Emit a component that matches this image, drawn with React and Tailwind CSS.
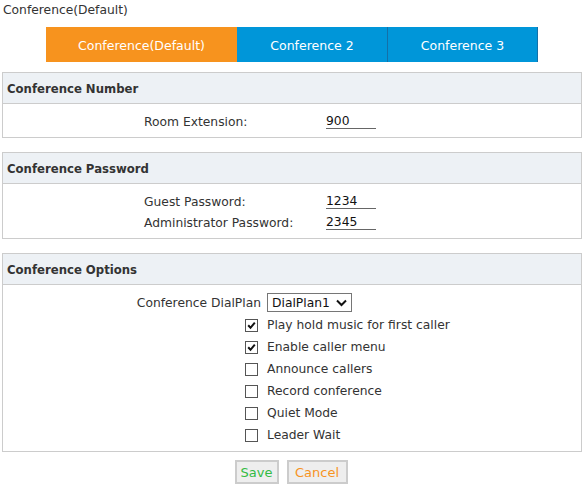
import React from "react";

const font = { fontFamily: '"DejaVu Sans", Verdana, sans-serif' };

function Section({ title, children }) {
  return (
    <div className="ml-[2px] w-[580px] border border-[#cccccc]">
      <div className="h-[31px] bg-[#edf1f5] border-b border-[#cccccc] flex items-center pl-[4px] pt-[3px] font-bold text-[11.7px] text-[#333333]">
        {title}
      </div>
      {children}
    </div>
  );
}

function Field({ label, value }) {
  return (
    <div className="flex items-center h-[21px] pl-[141px]">
      <div className="w-[182px] pt-[4px]">{label}</div>
      <div className="w-[50px] h-[17px] border-b border-[#666666] text-[#111111] leading-[15px] pt-[2px]">{value}</div>
    </div>
  );
}

function Check({ checked, label }) {
  return (
    <div className="flex items-center h-[22px] pl-[242px]">
      <div className="w-[13px] h-[13px] border border-[#555555] bg-white flex items-center justify-center">
        {checked && (
          <svg width="9" height="9" viewBox="0 0 9 9">
            <path d="M1.2 4.3 L3.5 6.8 L7.8 1.6" fill="none" stroke="#111" strokeWidth="2" />
          </svg>
        )}
      </div>
      <div className="ml-[9px] pt-[1px]">{label}</div>
    </div>
  );
}

export default function App() {
  return (
    <div className="w-[582px] h-[493px] bg-white text-[12.3px] text-[#333333]" style={font}>
      <div className="pt-[2px] px-[3px] leading-[16px]">Conference(Default)</div>
      <div className="mt-[9px] ml-[46px] flex h-[35px] text-white text-[12.5px]">
        <div className="w-[191px] bg-[#f7931e] flex items-center justify-center pt-[3px]">Conference(Default)</div>
        <div className="w-[151px] bg-[#0096d9] border-r border-[#1470a8] flex items-center justify-center pt-[3px]">Conference 2</div>
        <div className="w-[150px] bg-[#0096d9] border-r border-[#1470a8] flex items-center justify-center pt-[3px]">Conference 3</div>
      </div>

      <div className="mt-[10px]">
        <Section title="Conference Number">
          <div className="h-[33px] flex flex-col justify-center">
            <Field label="Room Extension:" value="900" />
          </div>
        </Section>
      </div>

      <div className="mt-[14px]">
        <Section title="Conference Password">
          <div className="pt-[6px] pb-[6px]">
            <Field label="Guest Password:" value="1234" />
            <Field label="Administrator Password:" value="2345" />
          </div>
        </Section>
      </div>

      <div className="mt-[14px]">
        <Section title="Conference Options">
          <div className="pt-[8px] pb-[5px]">
            <div className="flex items-center h-[19px]">
              <div className="w-[258px] text-right pt-[1px]">Conference DialPlan</div>
              <div className="ml-[6px] w-[85px] h-[19px] border border-[#767676] bg-white flex items-center justify-between pl-[4px] pr-[4px] text-[#111111]">
                <span className="pt-[1px]">DialPlan1</span>
                <svg width="11" height="8" viewBox="0 0 11 8">
                  <path d="M1 1.5 L5.5 6 L10 1.5" fill="none" stroke="#111" strokeWidth="2" />
                </svg>
              </div>
            </div>
            <div className="mt-[2px]">
              <Check checked label="Play hold music for first caller" />
              <Check checked label="Enable caller menu" />
              <Check label="Announce callers" />
              <Check label="Record conference" />
              <Check label="Quiet Mode" />
              <Check label="Leader Wait" />
            </div>
          </div>
        </Section>
      </div>

      <div className="mt-[8px] flex justify-center gap-[8px]">
        <div className="w-[44px] h-[24px] border-2 border-[#cccccc] bg-[#eeeeee] flex items-center justify-center pt-[1px] text-[13px] text-[#33bb44]">Save</div>
        <div className="w-[61px] h-[24px] border-2 border-[#cccccc] bg-[#eeeeee] flex items-center justify-center pt-[1px] text-[13px] text-[#f7931e]">Cancel</div>
      </div>
    </div>
  );
}
